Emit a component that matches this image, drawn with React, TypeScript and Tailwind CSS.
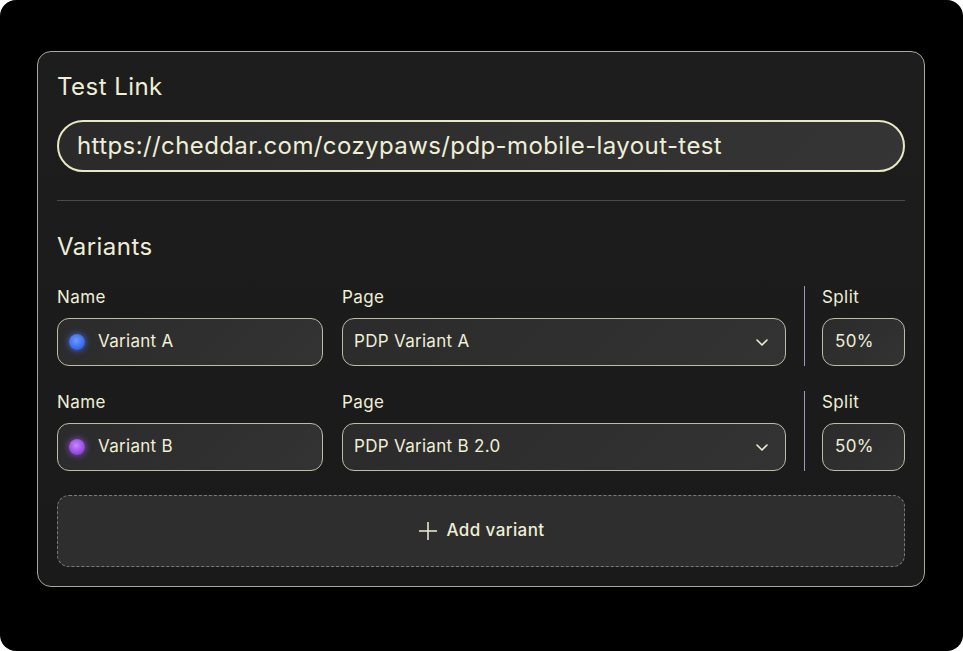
import React from "react";

const Chevron = () => (
  <svg width="16" height="16" viewBox="0 0 16 16" fill="none">
    <path d="M3 6l5 5 5-5" stroke="#efefd6" strokeWidth="1.6" strokeLinecap="round" strokeLinejoin="round" />
  </svg>
);

const Dot = ({ kind }: { kind: "blue" | "purple" }) =>
  kind === "blue" ? (
    <span className="w-[16px] h-[16px] rounded-full bg-[radial-gradient(circle_at_45%_40%,#6f9bff_0%,#3f6ef0_55%,#2a4fc0_100%)] shadow-[0_0_6px_1px_rgba(80,120,255,0.6)]" />
  ) : (
    <span className="w-[16px] h-[16px] rounded-full bg-[radial-gradient(circle_at_45%_40%,#c58aff_0%,#9a4fe6_55%,#7333b8_100%)] shadow-[0_0_6px_1px_rgba(170,90,255,0.6)]" />
  );

const Row = ({ name, page, kind }: { name: string; page: string; kind: "blue" | "purple" }) => (
  <div className="flex">
    <div className="w-[266px] flex flex-col gap-[10px]">
      <div className="text-[17px] leading-[22px] tracking-[0.4px] text-[#efefd6]">Name</div>
      <div className="h-[48px] rounded-[12px] border border-[#bdbda6] bg-[linear-gradient(135deg,#2b2b2b,#333333)] flex items-center gap-[13px] px-[11px]">
        <Dot kind={kind} />
        <span className="text-[17px] tracking-[0.3px] text-[#efefd6]">{name}</span>
      </div>
    </div>
    <div className="ml-[19px] flex-1 flex flex-col gap-[10px]">
      <div className="text-[17px] leading-[22px] tracking-[0.4px] text-[#efefd6]">Page</div>
      <div className="h-[48px] rounded-[12px] border border-[#bdbda6] bg-[linear-gradient(135deg,#2b2b2b,#333333)] flex items-center justify-between pl-[11px] pr-[15px]">
        <span className="text-[17px] tracking-[0.3px] text-[#efefd6]">{page}</span>
        <Chevron />
      </div>
    </div>
    <div className="ml-[18px] w-px bg-[#9a9ab8]" />
    <div className="ml-[17px] w-[83px] flex flex-col gap-[10px]">
      <div className="text-[17px] leading-[22px] tracking-[0.4px] text-[#efefd6]">Split</div>
      <div className="h-[48px] rounded-[12px] border border-[#bdbda6] bg-[linear-gradient(135deg,#2b2b2b,#333333)] flex items-center px-[12px]">
        <span className="text-[17px] tracking-[0.3px] text-[#efefd6]">50%</span>
      </div>
    </div>
  </div>
);

export default function App() {
  return (
    <div className="w-[963px] h-[651px] bg-white" style={{ fontFamily: "Inter, 'Noto Sans', sans-serif" }}>
      <div className="w-full h-full bg-black rounded-[16px] pt-[51px] px-[37px]">
        <div className="w-[888px] h-[536px] rounded-[14px] border border-[#a9a996] bg-[linear-gradient(180deg,#1d1d1d,#1a1a1a)] px-[19px] pt-[20px] pb-[19px] flex flex-col">
          <div className="text-[24px] leading-[30px] tracking-[0.45px] text-[#efefd6]">Test Link</div>
          <div className="mt-[18px] h-[52px] rounded-full border-2 border-[#e8e8c2] bg-[linear-gradient(135deg,#2a2a2a,#353535)] flex items-center px-[18px]">
            <span className="text-[24px] text-[#efefd6] tracking-[0.4px]">https://cheddar.com/cozypaws/pdp-mobile-layout-test</span>
          </div>
          <div className="mt-[28px] h-px bg-[#4a4a44]" />
          <div className="mt-[31px] text-[24px] leading-[30px] tracking-[0.45px] text-[#efefd6]">Variants</div>
          <div className="mt-[24px] flex flex-col gap-[25px]">
            <Row name="Variant A" page="PDP Variant A" kind="blue" />
            <Row name="Variant B" page="PDP Variant B 2.0" kind="purple" />
          </div>
          <div className="mt-[24px] h-[72px] rounded-[12px] border border-dashed border-[#7a7a76] bg-[#2e2e2e] flex items-center justify-center gap-[9px]">
            <svg width="20" height="20" viewBox="0 0 20 20" fill="none">
              <path d="M10 1v18M1 10h18" stroke="#efefd6" strokeWidth="1.5" />
            </svg>
            <span className="text-[17px] text-[#efefd6] font-medium tracking-[0.4px]">Add variant</span>
          </div>
        </div>
      </div>
    </div>
  );
}
